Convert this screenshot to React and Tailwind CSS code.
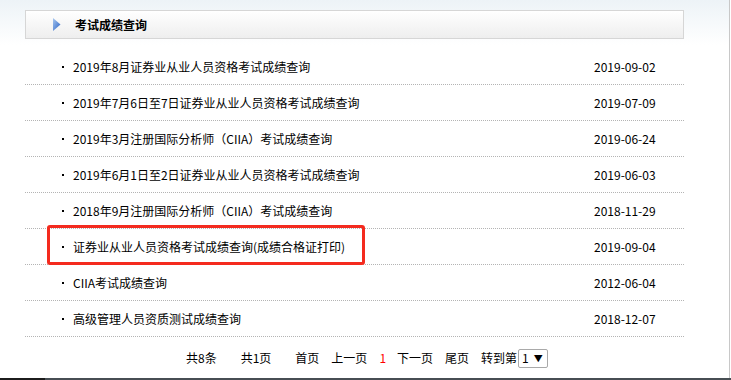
import React from "react";

const rows = [
  { title: "2019年8月证券业从业人员资格考试成绩查询", date: "2019-09-02" },
  { title: "2019年7月6日至7日证券业从业人员资格考试成绩查询", date: "2019-07-09" },
  { title: "2019年3月注册国际分析师（CIIA）考试成绩查询", date: "2019-06-24" },
  { title: "2019年6月1日至2日证券业从业人员资格考试成绩查询", date: "2019-06-03" },
  { title: "2018年9月注册国际分析师（CIIA）考试成绩查询", date: "2018-11-29" },
  { title: "证券业从业人员资格考试成绩查询(成绩合格证打印)", date: "2019-09-04" },
  { title: "CIIA考试成绩查询", date: "2012-06-04" },
  { title: "高级管理人员资质测试成绩查询", date: "2018-12-07" },
];

const Arrow = () => (
  <svg width="8" height="13" viewBox="0 0 8 13">
    <defs>
      <linearGradient id="arr" x1="0" y1="0" x2="1" y2="1">
        <stop offset="0" stopColor="#a9c8f0" />
        <stop offset="1" stopColor="#2a62c4" />
      </linearGradient>
    </defs>
    <polygon points="0,0 7.5,6.5 0,13" fill="url(#arr)" />
  </svg>
);

export default function App() {
  return (
    <div className="relative w-[731px] h-[380px] overflow-hidden bg-white font-['Noto_Sans_CJK_SC',sans-serif] text-[12px] text-black">
      <div className="flex flex-col h-full border-r border-[#c8c8c8] w-[730px] bg-gradient-to-b from-[#edf3f7] to-white to-[45px]">
        <div className="pl-[25px] pt-[10px]">
          {/* Header */}
          <div className="w-[659px] h-[29px] border border-[#d6d6d6] bg-gradient-to-b from-white to-[#eeeeee] flex items-center pl-[27px]">
            <Arrow />
            <span className="ml-[14px] font-bold text-[12px] text-black">考试成绩查询</span>
          </div>

          {/* List */}
          <ul className="w-[659px] mt-[10px]">
            {rows.map((r) => (
              <li
                key={r.title}
                className="h-[36px] border-b border-dotted border-[#b4b4b4] flex items-center"
              >
                <span className="ml-[37px] w-[2px] h-[2px] bg-black" />
                <span className="ml-[9px] flex-1">{r.title}</span>
                <span className="w-[90px]">{r.date}</span>
              </li>
            ))}
          </ul>
        </div>

        {/* Pagination */}
        <div className="flex-1 flex items-center pl-[186px] pb-[1px]">
          <span>共8条</span>
          <span className="ml-[24px]">共1页</span>
          <span className="ml-[24px]">首页</span>
          <span className="ml-[12px]">上一页</span>
          <span className="ml-[12px] text-[#f00]">1</span>
          <span className="ml-[11px]">下一页</span>
          <span className="ml-[12px]">尾页</span>
          <span className="ml-[12px]">转到第</span>
          <div className="ml-[1px] w-[30px] h-[19px] border border-[#a9a9a9] rounded-[2px] bg-white flex items-center pl-[3px]">
            <span className="text-[12px]">1</span>
            <span className="ml-[5px] text-[9px] leading-none">▼</span>
          </div>
        </div>
      </div>

      {/* bottom bar */}
      <div className="absolute left-0 bottom-0 w-full h-[2px] flex">
        <div className="w-[45px] bg-[#1c1c1c]" />
        <div className="flex-1 bg-[#474e53]" />
      </div>

      {/* red annotation box */}
      <div className="absolute left-[47px] top-[225px] w-[318px] h-[40px] border-[3px] border-[#f42a1e] rounded-[3px]" />
    </div>
  );
}
